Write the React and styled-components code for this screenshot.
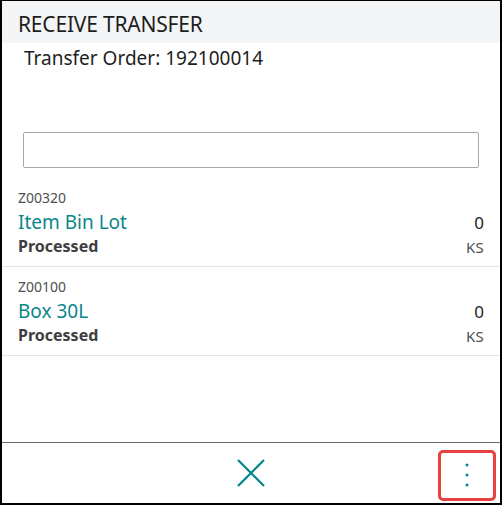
import React from "react";
import styled, { createGlobalStyle } from "styled-components";

const Global = createGlobalStyle`
  html, body { margin: 0; padding: 0; background: #fff; }
  * { box-sizing: border-box; }
`;

const Frame = styled.div`
  width: 502px;
  height: 505px;
  border-style: solid;
  border-color: #000;
  border-width: 1px 2px 2px 2px;
  display: flex;
  flex-direction: column;
  font-family: "Noto Sans", "Open Sans", sans-serif;
  color: #212121;
  background: #fff;
`;

const Header = styled.div`
  height: 42px;
  background: #f4f5f7;
  padding: 9px 0 0 16px;
  font-size: 21px;
  line-height: 28px;
  letter-spacing: -0.2px;
  color: #1e1e1e;
`;

const Subtitle = styled.div`
  padding: 3px 0 0 22px;
  font-size: 19px;
  line-height: 24px;
  color: #1e1e1e;
`;

const Body = styled.div`
  flex: 1;
  display: flex;
  flex-direction: column;
`;

const SearchInput = styled.input`
  margin: 62px 21px 10px 21px;
  height: 36px;
  border: 1px solid #a8a8a8;
  border-radius: 2px;
  outline: none;
  font-family: inherit;
  font-size: 16px;
  padding: 0 8px;
`;

const Row = styled.div`
  height: 89px;
  border-bottom: 1px solid #e4e4e4;
  padding: 11px 16px 0 16px;
  display: flex;
  justify-content: space-between;
`;

const Col = styled.div`
  display: flex;
  flex-direction: column;
  align-items: ${(p) => (p.$right ? "flex-end" : "flex-start")};
`;

const Code = styled.div`
  font-size: 14px;
  line-height: 18px;
  color: #505050;
`;

const Name = styled.div`
  margin-top: 2px;
  font-size: 19px;
  line-height: 26px;
  color: #0a868b;
`;

const Status = styled.div`
  font-size: 16px;
  line-height: 22px;
  font-weight: 700;
  color: #3e3e3e;
`;

const Qty = styled.div`
  margin-top: 24px;
  font-size: 17px;
  line-height: 20px;
  color: #212121;
`;

const Unit = styled.div`
  margin-top: 4px;
  font-size: 15px;
  line-height: 20px;
  letter-spacing: 0.3px;
  color: #505050;
`;

const Footer = styled.div`
  height: 61px;
  border-top: 1px solid #6b6b6b;
  display: grid;
  grid-template-columns: 1fr auto 1fr;
  align-items: center;
`;

const IconButton = styled.button`
  background: none;
  border: none;
  padding: 0;
  display: flex;
  align-items: center;
  justify-content: center;
  cursor: pointer;
`;

const MoreWrap = styled.div`
  justify-self: end;
  margin-right: 4px;
  width: 58px;
  height: 51px;
  border: 3px solid #e8403f;
  border-radius: 5px;
  display: flex;
  align-items: center;
  justify-content: center;
  margin-top: 4px;
`;

const items = [
  { code: "Z00320", name: "Item Bin Lot", qty: 0, unit: "KS" },
  { code: "Z00100", name: "Box 30L", qty: 0, unit: "KS" },
];

export default function App() {
  return (
    <>
      <Global />
      <Frame>
        <Header>RECEIVE TRANSFER</Header>
        <Subtitle>Transfer Order: 192100014</Subtitle>
        <Body>
          <SearchInput />
          {items.map((it) => (
            <Row key={it.code}>
              <Col>
                <Code>{it.code}</Code>
                <Name>{it.name}</Name>
                <Status>Processed</Status>
              </Col>
              <Col $right>
                <Qty>{it.qty}</Qty>
                <Unit>{it.unit}</Unit>
              </Col>
            </Row>
          ))}
        </Body>
        <Footer>
          <span />
          <IconButton aria-label="Close">
            <svg width="28" height="28" viewBox="0 0 28 28">
              <path d="M1 1 L27 27 M27 1 L1 27" stroke="#00858a" strokeWidth="2.2" fill="none" />
            </svg>
          </IconButton>
          <MoreWrap>
            <IconButton aria-label="More">
              <svg width="6" height="26" viewBox="0 0 6 26">
                <circle cx="3" cy="3" r="1.5" fill="#0b7f9c" />
                <circle cx="3" cy="13" r="1.5" fill="#0b7f9c" />
                <circle cx="3" cy="23" r="1.5" fill="#0b7f9c" />
              </svg>
            </IconButton>
          </MoreWrap>
        </Footer>
      </Frame>
    </>
  );
}
